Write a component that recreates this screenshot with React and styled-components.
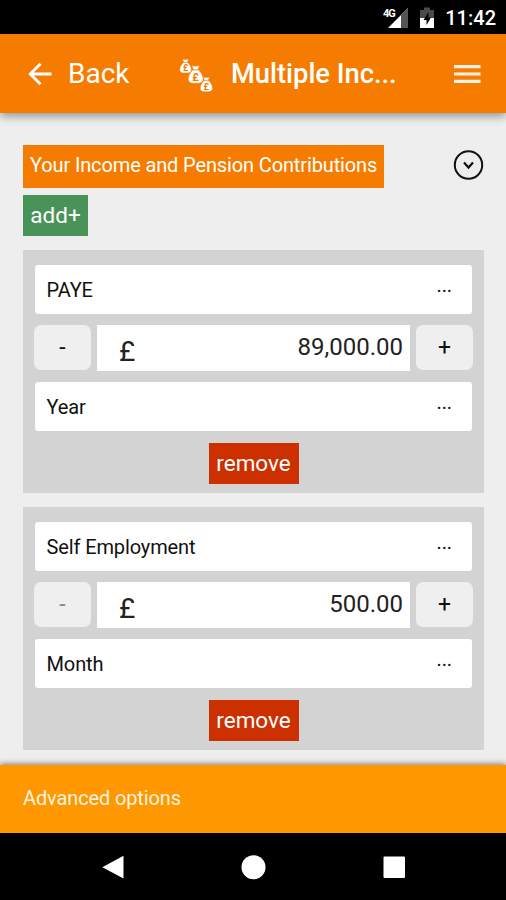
import { useState } from "react";
import styled, { createGlobalStyle } from "styled-components";

let GlobalStyle = createGlobalStyle`
    * { box-sizing : border-box; }
    body {
        margin : 0;
        background : #eee;
        font-family : Roboto, "Liberation Sans", sans-serif;
    }
    button { font-family : inherit; border : none; padding : 0; }
`

let Screen = styled.div`
    width : 506px;
    height : 900px;
    display : flex;
    flex-direction : column;
    overflow : hidden;
    background : #eee;
`

let StatusBar = styled.div`
    height : 34px;
    flex : none;
    display : flex;
    align-items : center;
    justify-content : flex-end;
    padding : 2px 10px 0 0;
    background : #000;
    color : #fff;
`

let Clock = styled.span`
    margin-left : 11px;
    font-size : 20px;
    font-weight : 500;
    line-height : 32px;
`

let Header = styled.header`
    height : 79px;
    flex : none;
    display : flex;
    align-items : center;
    padding : 0 25px 0 28px;
    background : #f57c00;
    color : #fff;
    box-shadow : 0 3px 9px rgba(0, 0, 0, 0.4);
    z-index : 1;
`

let BackBtn = styled.button`
    display : flex;
    align-items : center;
    gap : 16px;
    width : 151px;
    background : none;
    color : #fff;
    font-size : 28px;
    line-height : 34px;
    padding-top : 1px;
`

let PageTitle = styled.h1`
    flex : 1;
    margin : 0 0 0 18px;
    padding-top : 1px;
    font-size : 27.3px;
    font-weight : 500;
    line-height : 34px;
    white-space : nowrap;
`

let Content = styled.main`
    flex : 1;
    min-height : 0;
    padding : 32px 22px 0 23px;
`

let TitleRow = styled.div`
    display : flex;
    justify-content : space-between;
    height : 43px;
    margin-bottom : 7px;
`

let TitleTag = styled.div`
    width : 361px;
    padding-left : 7px;
    background : #f57c00;
    color : #fff;
    font-size : 20px;
    letter-spacing : -0.13px;
    line-height : 40px;
    white-space : nowrap;
`

let ToggleBtn = styled.button`
    width : 32px;
    height : 43px;
    background : none;
`

let ColorBtn = styled.button`
    display : block;
    width : ${props => props.$width};
    height : 41px;
    margin : ${props => props.$center ? '0 auto' : '0'};
    padding-bottom : 2px;
    background : ${props => props.$bg};
    color : #fff;
    font-size : 22.5px;
    line-height : 38px;
`

let Card = styled.section`
    height : 243px;
    margin-top : 14px;
    padding : 15px 12px 0;
    background : #d3d3d3;
`

let SelectBox = styled.div`
    display : flex;
    justify-content : space-between;
    height : 49px;
    margin-bottom : ${props => props.$gap || '0'};
    padding : 0 20px 0 11.5px;
    border-radius : 3px;
    background : #fff;
    color : #111;
    font-size : 20px;
    letter-spacing : -0.12px;
    line-height : 50px;
`

let Dots = styled.span`
    line-height : 41px;
`

let AmountRow = styled.div`
    display : flex;
    justify-content : space-between;
    height : 46px;
    margin : 11px -1px;
`

let StepBtn = styled.button`
    width : 57px;
    height : 45px;
    border-radius : 7px;
    background : #efefef;
    color : ${props => props.disabled ? '#888' : '#111'};
    font-size : 23px;
    line-height : 43px;
`

let AmountBox = styled.div`
    width : 313px;
    display : flex;
    justify-content : space-between;
    padding : 0 7px 0 22px;
    background : #fff;
    color : #222;
    font-size : 24px;
    line-height : 45px;
`

let Currency = styled.span`
    padding-top : 4px;
    font-size : 28px;
`

let Footer = styled.footer`
    height : 68px;
    flex : none;
    padding-left : 23px;
    background : #ff9800;
    color : #fff3e0;
    font-size : 20px;
    letter-spacing : -0.13px;
    line-height : 66px;
    box-shadow : 0 -1px 6px rgba(0, 0, 0, 0.5);
    z-index : 1;
`

let NavBar = styled.nav`
    height : 67px;
    flex : none;
    display : flex;
    align-items : center;
    justify-content : space-between;
    padding : 0 100px;
    background : #000;
    z-index : 2;
`

let NavBtn = styled.button`
    width : 26px;
    height : 26px;
    background : none;
    svg { display : block; }
`

let BatterySvg = styled.svg`
    margin-left : 11px;
`

let incomes = [
    { id : 0, type : 'PAYE', amount : 89000, period : 'Year' },
    { id : 1, type : 'Self Employment', amount : 500, period : 'Month' },
]

function App() {

    let [list, setList] = useState(incomes);

    function change(id, diff) {
        setList(list.map(a => a.id == id ? {...a, amount : a.amount + diff} : a));
    }

    return (
        <Screen>
            <GlobalStyle />
            <StatusBar>
                <SignalIcon />
                <BatteryIcon />
                <Clock>11:42</Clock>
            </StatusBar>
            <Header>
                <BackBtn>
                    <svg width="24" height="24" viewBox="0 0 24 24" fill="none" stroke="#fff" strokeWidth="2.9">
                        <path d="M23.5 12H2.5M12.5 1.8L2.3 12L12.5 22.2" />
                    </svg>
                    Back
                </BackBtn>
                <MoneyBags />
                <PageTitle>Multiple Inc...</PageTitle>
                <svg width="28" height="20" fill="#fff3e6">
                    <path d="M1 1h26.5v3.2H1zM1 8.4h26.5v3.2H1zM1 15.8h26.5v3.2H1z" />
                </svg>
            </Header>
            <Content>
                <TitleRow>
                    <TitleTag>Your Income and Pension Contributions</TitleTag>
                    <ToggleBtn>
                        <svg width="32" height="32" fill="none" stroke="#111" strokeWidth="2">
                            <circle cx="16.5" cy="16" r="13.7" />
                            <path d="M12 13.5L16.5 18.5L21 13.5" strokeWidth="2.2" />
                        </svg>
                    </ToggleBtn>
                </TitleRow>
                <ColorBtn $bg="#4a9358" $width="65px" onClick={() => {
                    setList([...list, { id : list.length, type : 'PAYE', amount : 0, period : 'Year' }])
                }}>add+</ColorBtn>
                {
                    list.map(income =>
                        <IncomeCard key={income.id} income={income} change={change}
                            remove={() => { setList(list.filter(a => a.id != income.id)) }} />
                    )
                }
            </Content>
            <Footer>Advanced options</Footer>
            <NavBar>
                <NavBtn><svg width="26" height="26" fill="#fff"><path d="M23.5 1.8V24.5L2.3 13.2z" /></svg></NavBtn>
                <NavBtn><svg width="26" height="26" fill="#fff"><circle cx="13.5" cy="13.2" r="12" /></svg></NavBtn>
                <NavBtn><svg width="26" height="26" fill="#fff"><rect x="3.5" y="2.5" width="21.5" height="21.5" rx="1" /></svg></NavBtn>
            </NavBar>
        </Screen>
    )
}

function IncomeCard({income, change, remove}) {
    let amount = income.amount.toLocaleString('en-GB', { minimumFractionDigits : 2 });

    return (
        <Card>
            <SelectBox><span>{income.type}</span><Dots>...</Dots></SelectBox>
            <AmountRow>
                <StepBtn disabled={income.amount <= 500} onClick={() => { change(income.id, -500) }}>-</StepBtn>
                <AmountBox><Currency>£</Currency><span>{amount}</span></AmountBox>
                <StepBtn onClick={() => { change(income.id, 500) }}>+</StepBtn>
            </AmountRow>
            <SelectBox $gap="12px"><span>{income.period}</span><Dots>...</Dots></SelectBox>
            <ColorBtn $bg="#cc2f00" $width="90px" $center onClick={remove}>remove</ColorBtn>
        </Card>
    )
}

function SignalIcon() {
    return (
        <svg width="27" height="22" viewBox="0 0 27 22">
            <path d="M26 1V21H6z" fill="#fff" />
            <path d="M19 8L26 1V21H19z" fill="#555" />
            <text x="1" y="10" fill="#fff" stroke="#000" strokeWidth="2" paintOrder="stroke"
                fontSize="11" fontWeight="700" letterSpacing="-1">4G</text>
        </svg>
    )
}

function BatteryIcon() {
    return (
        <BatterySvg width="14" height="22" viewBox="0 0 14 22">
            <path d="M0 3H4V0.5H10V3H14V21H0z" fill="#4a4a4a" />
            <path d="M0 11H14V21H0z" fill="#fff" />
            <path d="M8.5 5L3.5 13H6.5V18L11 10.5H8.5z" fill="#000" />
        </BatterySvg>
    )
}

function MoneyBags() {
    let bags = [[0.5, 5, 0.93], [9, 11.5, 1.18], [21, 23, 0.98]];
    return (
        <svg width="34" height="40" viewBox="0 0 34 40">
            {
                bags.map(([x, y, s], i) =>
                    <g key={i} transform={`translate(${x} ${y}) scale(${s})`}>
                        <path d="M3.2 0Q6.5 1.2 9.8 0L8.4 3.4C11 5.5 13 9 12.7 12C12.4 14.6 10 15 6.5 15C3 15 .6 14.6 .3 12C0 9 2 5.5 4.6 3.4z"
                            fill="#fff" stroke="#f57c00" strokeWidth="0.4" />
                        <path d="M4.4 3.7H8.6" stroke="#f57c00" strokeWidth="0.7" />
                        <text x="6.5" y="12.8" textAnchor="middle" fill="#f57c00" fontSize="9.5" fontWeight="700">£</text>
                    </g>
                )
            }
        </svg>
    )
}

export default App;
